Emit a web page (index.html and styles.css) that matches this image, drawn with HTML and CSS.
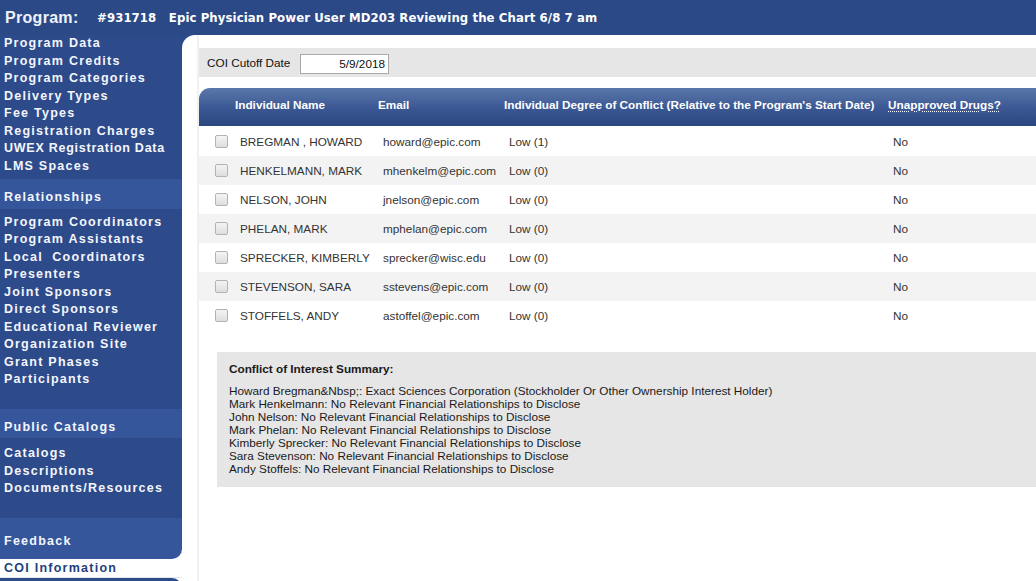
FILE: index.html
```html
<!DOCTYPE html>
<html>
<head>
<meta charset="utf-8">
<title>COI Information</title>
<link rel="stylesheet" href="styles.css">
</head>
<body>
<header class="topbar">
  <span class="prog-label">Program:</span>
  <span class="prog-title">#931718&nbsp;&nbsp; Epic Physician Power User MD203 Reviewing the Chart 6/8 7 am</span>
</header>
<div class="layout">
  <nav class="sidebar">
    <div class="group first">
      <a>Program Data</a>
      <a>Program Credits</a>
      <a>Program Categories</a>
      <a>Delivery Types</a>
      <a>Fee Types</a>
      <a>Registration Charges</a>
      <a class="tight">UWEX Registration Data</a>
      <a>LMS Spaces</a>
    </div>
    <div class="band">Relationships</div>
    <div class="group">
      <a>Program Coordinators</a>
      <a>Program Assistants</a>
      <a>Local&nbsp; Coordinators</a>
      <a>Presenters</a>
      <a>Joint Sponsors</a>
      <a>Direct Sponsors</a>
      <a>Educational Reviewer</a>
      <a>Organization Site</a>
      <a>Grant Phases</a>
      <a>Participants</a>
    </div>
    <div class="band">Public Catalogs</div>
    <div class="group g3">
      <a>Catalogs</a>
      <a>Descriptions</a>
      <a>Documents/Resources</a>
    </div>
    <div class="band feedback">Feedback</div>
    <div class="active">COI Information</div>
    <div class="next">Credit Information</div>
  </nav>
  <main class="main">
    <div class="content">
      <div class="cutoff">
        <span class="cutoff-label">COI Cutoff Date</span>
        <span class="cutoff-input">5/9/2018</span>
      </div>
      <div class="grid">
        <div class="row head">
          <div></div>
          <div>Individual Name</div>
          <div>Email</div>
          <div>Individual Degree of Conflict (Relative to the Program's Start Date)</div>
          <div><span class="dotted">Unapproved Drugs?</span></div>
        </div>
        <div class="row"><div><span class="cb"></span></div><div>BREGMAN , HOWARD</div><div>howard@epic.com</div><div>Low (1)</div><div>No</div></div>
        <div class="row alt"><div><span class="cb"></span></div><div>HENKELMANN, MARK</div><div>mhenkelm@epic.com</div><div>Low (0)</div><div>No</div></div>
        <div class="row"><div><span class="cb"></span></div><div>NELSON, JOHN</div><div>jnelson@epic.com</div><div>Low (0)</div><div>No</div></div>
        <div class="row alt"><div><span class="cb"></span></div><div>PHELAN, MARK</div><div>mphelan@epic.com</div><div>Low (0)</div><div>No</div></div>
        <div class="row"><div><span class="cb"></span></div><div>SPRECKER, KIMBERLY</div><div>sprecker@wisc.edu</div><div>Low (0)</div><div>No</div></div>
        <div class="row alt"><div><span class="cb"></span></div><div>STEVENSON, SARA</div><div>sstevens@epic.com</div><div>Low (0)</div><div>No</div></div>
        <div class="row"><div><span class="cb"></span></div><div>STOFFELS, ANDY</div><div>astoffel@epic.com</div><div>Low (0)</div><div>No</div></div>
      </div>
      <div class="summary">
        <div class="summary-title">Conflict of Interest Summary:</div>
        <div class="summary-lines">
          <div>Howard Bregman&amp;Nbsp;: Exact Sciences Corporation (Stockholder Or Other Ownership Interest Holder)</div>
          <div>Mark Henkelmann: No Relevant Financial Relationships to Disclose</div>
          <div>John Nelson: No Relevant Financial Relationships to Disclose</div>
          <div>Mark Phelan: No Relevant Financial Relationships to Disclose</div>
          <div>Kimberly Sprecker: No Relevant Financial Relationships to Disclose</div>
          <div>Sara Stevenson: No Relevant Financial Relationships to Disclose</div>
          <div>Andy Stoffels: No Relevant Financial Relationships to Disclose</div>
        </div>
      </div>
    </div>
  </main>
</div>
</body>
</html>
```

FILE: styles.css
```css
html, body {
  margin: 0;
  padding: 0;
  overflow: hidden;
  height: 581px;
  background: #fff;
  font-family: "Liberation Sans", Arial, sans-serif;
}

.topbar {
  height: 35px;
  background: #2c4987;
  color: #fff;
  display: flex;
  align-items: center;
  padding-left: 5px;
  box-sizing: border-box;
  white-space: nowrap;
}

.prog-label {
  font-size: 16px;
  font-weight: bold;
  letter-spacing: 0.3px;
  width: 92px;
  color: #eef2fa;
}

.prog-title {
  font-size: 13px;
  font-weight: bold;
  font-family: "DejaVu Sans Condensed", "DejaVu Sans", sans-serif;
  letter-spacing: 0.1px;
}

.layout {
  display: flex;
  background: linear-gradient(#2c4987 0 20px, #fff 20px);
  align-items: flex-start;
}

.sidebar {
  width: 182px;
  flex: none;
  color: #f4f6fb;
  font-size: 12.5px;
  font-weight: bold;
  letter-spacing: 1.25px;
  line-height: 17.5px;
}

.sidebar a {
  display: block;
  padding-left: 4px;
  white-space: nowrap;
}

.sidebar a.tight {
  letter-spacing: 0.75px;
}

.group {
  background: #2d4a8b;
  padding: 5px 0 20px;
}

.group.first {
  padding: 0 0 4px;
}

.group.g3 {
  padding: 7px 0 20.5px;
}

.band {
  background: #35569b;
  padding: 10px 0 2px 4px;
}

.band.feedback {
  padding: 15px 0 8px 4px;
  border-bottom-right-radius: 10px;
}

.active {
  background: #fff;
  color: #223f7d;
  padding: 1px 0 0 4px;
  border-bottom: 1px solid #e4e4e4;
}

.next {
  background: #2d4a8b;
  border-top-right-radius: 10px;
  padding: 2px 0 10px 4px;
}

.main {
  flex: 1;
  min-width: 0;
  background: #fff;
  border-top-left-radius: 13px;
  padding-left: 15px;
  height: 546px;
}

.content {
  border-left: 2px solid #f1f1f1;
  padding-top: 13px;
  height: 100%;
  box-sizing: border-box;
}

.cutoff {
  background: #e6e6e6;
  height: 29px;
  display: flex;
  align-items: center;
  padding-left: 8px;
  font-size: 11.75px;
  color: #111;
}

.cutoff-label {
  width: 93px;
}

.cutoff-input {
  width: 89px;
  height: 20px;
  box-sizing: border-box;
  border: 1px solid #a9a9a9;
  background: #fff;
  text-align: right;
  padding-right: 3px;
  line-height: 18px;
  margin-top: 3px;
}

.grid {
  margin-top: 11px;
  font-size: 11.75px;
  color: #333;
}

.row {
  display: grid;
  grid-template-columns: 36px 143px 126px 384px 1fr;
  height: 29px;
  align-items: center;
  white-space: nowrap;
}

.row > div + div {
  padding-left: 5px;
}

.row.alt {
  background: #f3f3f3;
}

.row.head {
  height: 38px;
  margin-bottom: 1px;
  background: linear-gradient(#5b77aa, #3a5793 55%, #2b467f);
  border-top-left-radius: 11px;
  color: #fff;
  font-weight: bold;
  padding-bottom: 5px;
  box-sizing: border-box;
}

.row.head > div + div {
  padding-left: 0;
}

.dotted {
  text-decoration: underline dotted;
  text-underline-offset: 2px;
}

.cb {
  display: block;
  width: 11px;
  height: 11px;
  margin-left: 16px;
  border: 1px solid #b3b3b3;
  border-radius: 2px;
  background: linear-gradient(#f4f4f4, #dedede);
}

.summary {
  margin: 22px 0 0 18px;
  height: 135px;
  box-sizing: border-box;
  background: #e6e6e6;
  padding: 9px 0 0 12px;
  font-size: 11.75px;
  color: #1a1a1a;
}

.summary-title {
  font-weight: bold;
  line-height: 15px;
  margin-bottom: 8px;
}

.summary-lines {
  line-height: 13px;
  white-space: nowrap;
}
```
